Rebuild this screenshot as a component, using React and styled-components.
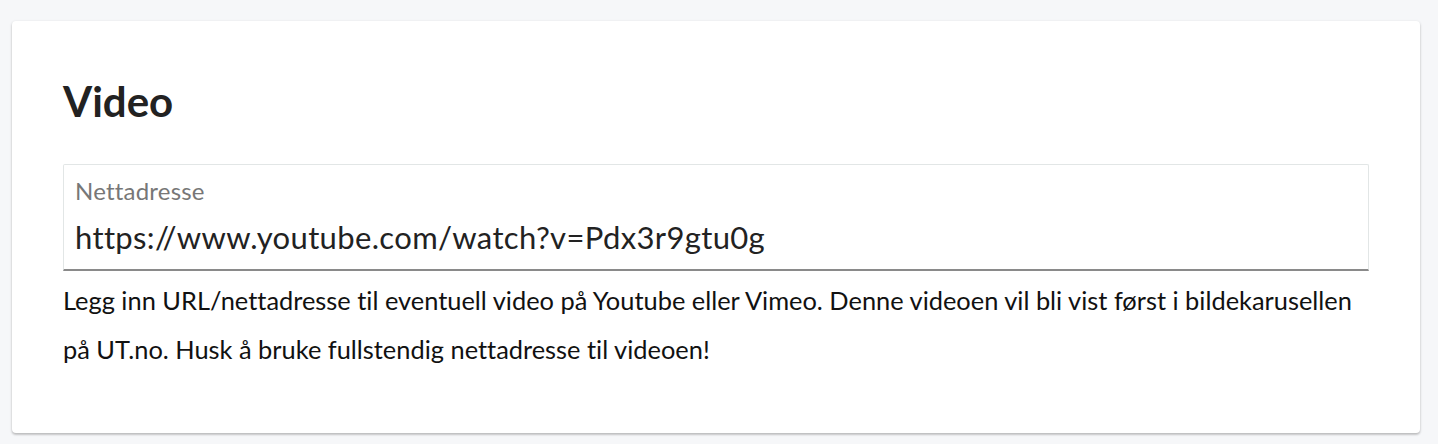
import React from "react";
import styled, { createGlobalStyle } from "styled-components";

const Global = createGlobalStyle`
  html, body { margin: 0; padding: 0; background: #f6f7f9; }
  body {
    font-family: Lato, "Noto Sans", sans-serif;
    color: #222;
    font-variant-ligatures: no-common-ligatures;
  }
`;

const Page = styled.div`
  padding: 21px 18px 11px 12px;
`;

const Card = styled.section`
  background: #fff;
  border-radius: 4px;
  box-shadow: 0 1px 3px rgba(0,0,0,0.18), 0 2px 2px rgba(0,0,0,0.12);
  padding: 56px 51px 40px 51px;
  min-height: 412px;
  box-sizing: border-box;
`;

const Title = styled.h2`
  margin: 0 0 39px 0;
  font-size: 42px;
  font-weight: 700;
  line-height: 48px;
  color: #222;
`;

const Field = styled.div`
  border: 1px solid #e2e6e6;
  border-bottom: 2px solid #8a8a8a;
  border-radius: 2px 2px 0 0;
  padding: 12px 11px 10px 11px;
  display: flex;
  flex-direction: column;
`;

const Label = styled.label`
  font-size: 24px;
  line-height: 28px;
  letter-spacing: 0.2px;
  color: #777;
`;

const Value = styled.div`
  margin-top: 10px;
  font-size: 31px;
  line-height: 44px;
  letter-spacing: 0.35px;
  color: #222;
`;

const Help = styled.p`
  margin: 5px 0 0 0;
  max-width: 1300px;
  font-size: 25.4px;
  line-height: 49px;
  color: #111;
`;

export default function App() {
  return (
    <>
      <Global />
      <Page>
        <Card>
          <Title>Video</Title>
          <Field>
            <Label>Nettadresse</Label>
            <Value>https://www.youtube.com/watch?v=Pdx3r9gtu0g</Value>
          </Field>
          <Help>
            Legg inn URL/nettadresse til eventuell video på Youtube eller Vimeo. Denne videoen vil bli vist først i bildekarusellen på UT.no. Husk å bruke fullstendig nettadresse til videoen!
          </Help>
        </Card>
      </Page>
    </>
  );
}
